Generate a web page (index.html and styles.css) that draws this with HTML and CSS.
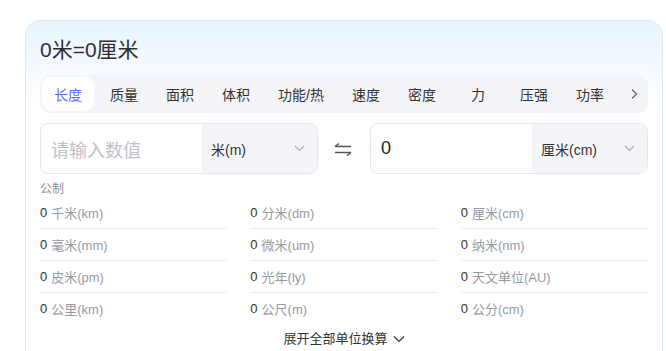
FILE: index.html
```html
<!DOCTYPE html>
<html lang="zh">
<head>
<meta charset="utf-8">
<link rel="stylesheet" href="styles.css">
</head>
<body>
<div class="page">
  <div class="card">
    <div class="title">0米=0厘米</div>
    <div class="tabs">
      <div class="tab active">长度</div>
      <div class="tab">质量</div>
      <div class="tab">面积</div>
      <div class="tab">体积</div>
      <div class="tab">功能/热</div>
      <div class="tab">速度</div>
      <div class="tab">密度</div>
      <div class="tab">力</div>
      <div class="tab">压强</div>
      <div class="tab">功率</div>
      <div class="tab-next">
        <svg width="8" height="12" viewBox="0 0 8 12"><path d="M2 1.5 L6.5 6 L2 10.5" fill="none" stroke="#666" stroke-width="1.3"/></svg>
      </div>
    </div>
    <div class="inputs">
      <div class="box">
        <div class="field placeholder">请输入数值</div>
        <div class="select"><span>米(m)</span><svg class="chev" width="11" height="7" viewBox="0 0 11 7"><path d="M1 1 L5.5 5.5 L10 1" fill="none" stroke="#a8abb2" stroke-width="1.2"/></svg></div>
      </div>
      <div class="swap">
        <svg width="20" height="14" viewBox="0 0 20 14"><path d="M2 4.5 H18 M2 4.5 L6 1.5" fill="none" stroke="#555" stroke-width="1.5"/><path d="M2 10.5 H18 M18 10.5 L14 13.5" fill="none" stroke="#555" stroke-width="1.5"/></svg>
      </div>
      <div class="box">
        <div class="field value">0</div>
        <div class="select"><span>厘米(cm)</span><svg class="chev" width="11" height="7" viewBox="0 0 11 7"><path d="M1 1 L5.5 5.5 L10 1" fill="none" stroke="#a8abb2" stroke-width="1.2"/></svg></div>
      </div>
    </div>
    <div class="group">公制</div>
    <div class="results">
      <div class="row"><span class="num">0</span><span class="unit">千米(km)</span></div>
      <div class="row"><span class="num">0</span><span class="unit">分米(dm)</span></div>
      <div class="row"><span class="num">0</span><span class="unit">厘米(cm)</span></div>
      <div class="row"><span class="num">0</span><span class="unit">毫米(mm)</span></div>
      <div class="row"><span class="num">0</span><span class="unit">微米(um)</span></div>
      <div class="row"><span class="num">0</span><span class="unit">纳米(nm)</span></div>
      <div class="row"><span class="num">0</span><span class="unit">皮米(pm)</span></div>
      <div class="row"><span class="num">0</span><span class="unit">光年(ly)</span></div>
      <div class="row"><span class="num">0</span><span class="unit">天文单位(AU)</span></div>
      <div class="row last"><span class="num">0</span><span class="unit">公里(km)</span></div>
      <div class="row last"><span class="num">0</span><span class="unit">公尺(m)</span></div>
      <div class="row last"><span class="num">0</span><span class="unit">公分(cm)</span></div>
    </div>
    <div class="expand">展开全部单位换算<svg width="12" height="8" viewBox="0 0 12 8"><path d="M1 1.5 L6 6.5 L11 1.5" fill="none" stroke="#333" stroke-width="1.2"/></svg></div>
  </div>
</div>
</body>
</html>
```
FILE: styles.css
```css
* { box-sizing: border-box; }
html, body { margin: 0; padding: 0; background: #fff; }
body {
  font-family: "Liberation Sans", "Noto Sans CJK SC", sans-serif;
  color: #333;
}
.page { padding: 20px 0 0 25px; height: 351px; overflow: hidden; }
.card {
  width: 638px;
  height: 345px;
  border: 1px solid #d9eafb;
  border-bottom: none;
  border-radius: 16px 16px 0 0;
  padding: 14px 14px 0 14px;
  background: linear-gradient(180deg, #e9f5ff 0px, #ffffff 90px);
}
.title {
  font-size: 21px;
  line-height: 30px;
  color: #2f2f2f;
}
.tabs {
  margin-top: 10px;
  height: 38px;
  background: #f4f5f9;
  border-radius: 10px;
  padding: 2px;
  display: flex;
  align-items: center;
  gap: 4px;
}
.tab {
  min-width: 52px;
  height: 34px;
  padding: 0 12px;
  display: flex;
  align-items: center;
  justify-content: center;
  font-size: 14px;
  color: #333;
  border-radius: 9px;
  white-space: nowrap;
}
.tab.active { background: #fff; color: #5d6af3; }
.tab-next {
  flex: 1;
  display: flex;
  justify-content: flex-end;
  padding-right: 8px;
}
.inputs {
  margin-top: 10px;
  display: flex;
  height: 51px;
}
.box {
  flex: 1;
  display: flex;
  border: 1px solid #e7e8ec;
  border-radius: 8px;
  overflow: hidden;
  background: #fff;
}
.field {
  flex: 1;
  display: flex;
  align-items: center;
  padding-left: 10px;
  font-size: 18px;
}
.placeholder { color: #bfc1c6; }
.value { color: #222; }
.select {
  width: 115px;
  background: #f4f5f9;
  display: flex;
  align-items: center;
  justify-content: space-between;
  padding: 0 12px 0 9px;
  font-size: 14px;
  color: #333;
}
.swap {
  width: 52px;
  display: flex;
  align-items: center;
  justify-content: center;
  padding-right: 2px;
}
.group {
  margin-top: 8px;
  font-size: 12px;
  line-height: 15px;
  color: #8c8f96;
}
.results {
  display: grid;
  grid-template-columns: repeat(3, 1fr);
  column-gap: 23px;
}
.row {
  height: 32px;
  display: flex;
  align-items: center;
  font-size: 13px;
  padding-bottom: 1px;
  border-bottom: 1px solid #ececef;
}
.row.last { border-bottom: none; }
.num { color: #333; margin-right: 4px; }
.unit { color: #969aa3; }
.expand {
  margin-top: 6px;
  display: flex;
  justify-content: center;
  align-items: center;
  gap: 5px;
  font-size: 13px;
  line-height: 16px;
  color: #333;
}
```
